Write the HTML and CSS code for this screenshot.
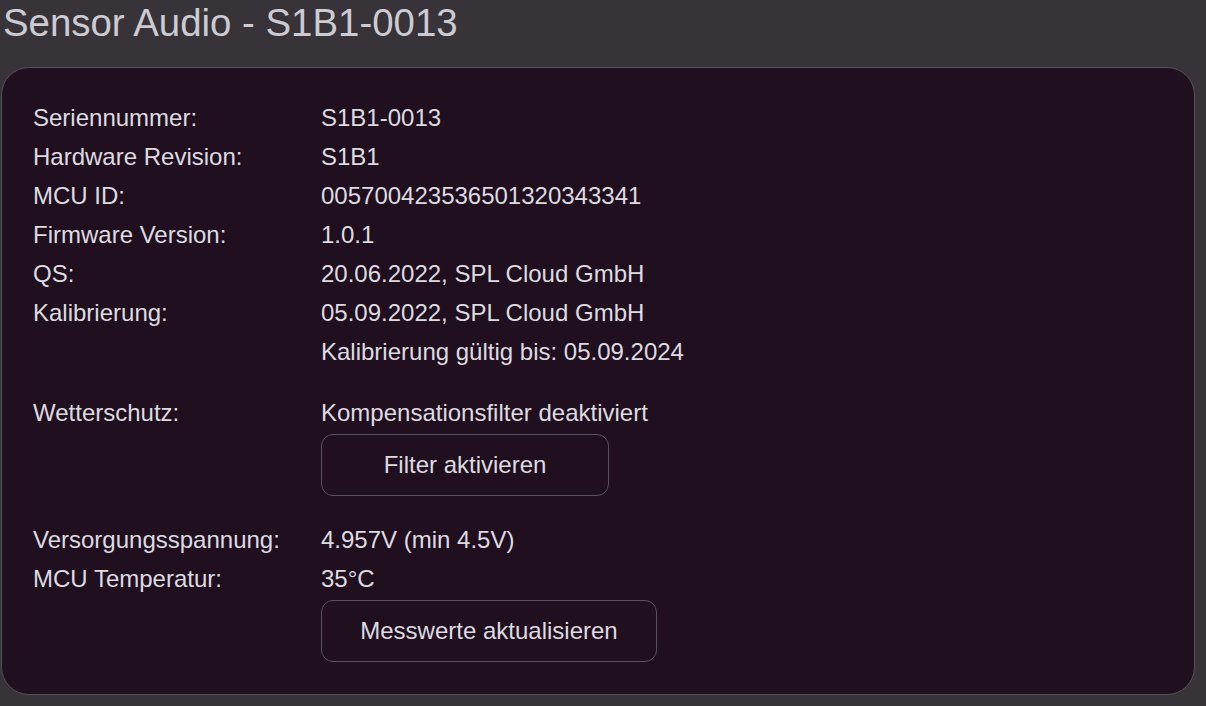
FILE: index.html
```html
<!DOCTYPE html>
<html lang="de">
<head>
<meta charset="utf-8">
<title>Sensor Audio - S1B1-0013</title>
<link rel="stylesheet" href="styles.css">
</head>
<body>
<div class="page">
  <h1 class="title">Sensor Audio - S1B1-0013</h1>
  <section class="card">
    <div class="group">
      <div class="label">Seriennummer:</div><div class="value">S1B1-0013</div>
      <div class="label">Hardware Revision:</div><div class="value">S1B1</div>
      <div class="label">MCU ID:</div><div class="value">005700423536501320343341</div>
      <div class="label">Firmware Version:</div><div class="value">1.0.1</div>
      <div class="label">QS:</div><div class="value">20.06.2022, SPL Cloud GmbH</div>
      <div class="label">Kalibrierung:</div><div class="value">05.09.2022, SPL Cloud GmbH<br>Kalibrierung gültig bis: 05.09.2024</div>
    </div>
    <div class="group">
      <div class="label">Wetterschutz:</div>
      <div class="value">Kompensationsfilter deaktiviert
        <button class="btn btn-filter" type="button">Filter aktivieren</button>
      </div>
    </div>
    <div class="group">
      <div class="label">Versorgungsspannung:</div><div class="value">4.957V (min 4.5V)</div>
      <div class="label">MCU Temperatur:</div>
      <div class="value">35°C
        <button class="btn btn-update" type="button">Messwerte aktualisieren</button>
      </div>
    </div>
  </section>
</div>
</body>
</html>
```

FILE: styles.css
```css
html, body {
  margin: 0;
  padding: 0;
  background: #373338;
  height: 100%;
}
body {
  font-family: "Liberation Sans", Arial, sans-serif;
  color: #dedbe0;
  overflow: hidden;
}
.page {
  padding: 0 11px 0 1px;
}
.title {
  margin: 0 0 0 2px;
  padding-top: 1px;
  font-size: 38.4px;
  font-weight: normal;
  line-height: 44px;
  color: #cdcbd2;
  height: 66px;
}
.card {
  background: #200f1f;
  border: 1px solid #57535a;
  border-radius: 28px;
  padding: 30px 31px 30px 31px;
  display: flex;
  flex-direction: column;
  gap: 22px;
}
.group {
  display: grid;
  grid-template-columns: 288px 1fr;
  font-size: 24px;
  line-height: 39px;
}
.value {
  display: flex;
  flex-direction: column;
  align-items: flex-start;
}
.btn {
  margin: 2px 0;
  height: 62px;
  padding: 0;
  background: transparent;
  border: 1px solid #58535b;
  border-radius: 12px;
  color: #dedbe0;
  font-family: "Liberation Sans", Arial, sans-serif;
  font-size: 24px;
}
.btn-filter {
  width: 288px;
}
.btn-update {
  width: 336px;
}
```
